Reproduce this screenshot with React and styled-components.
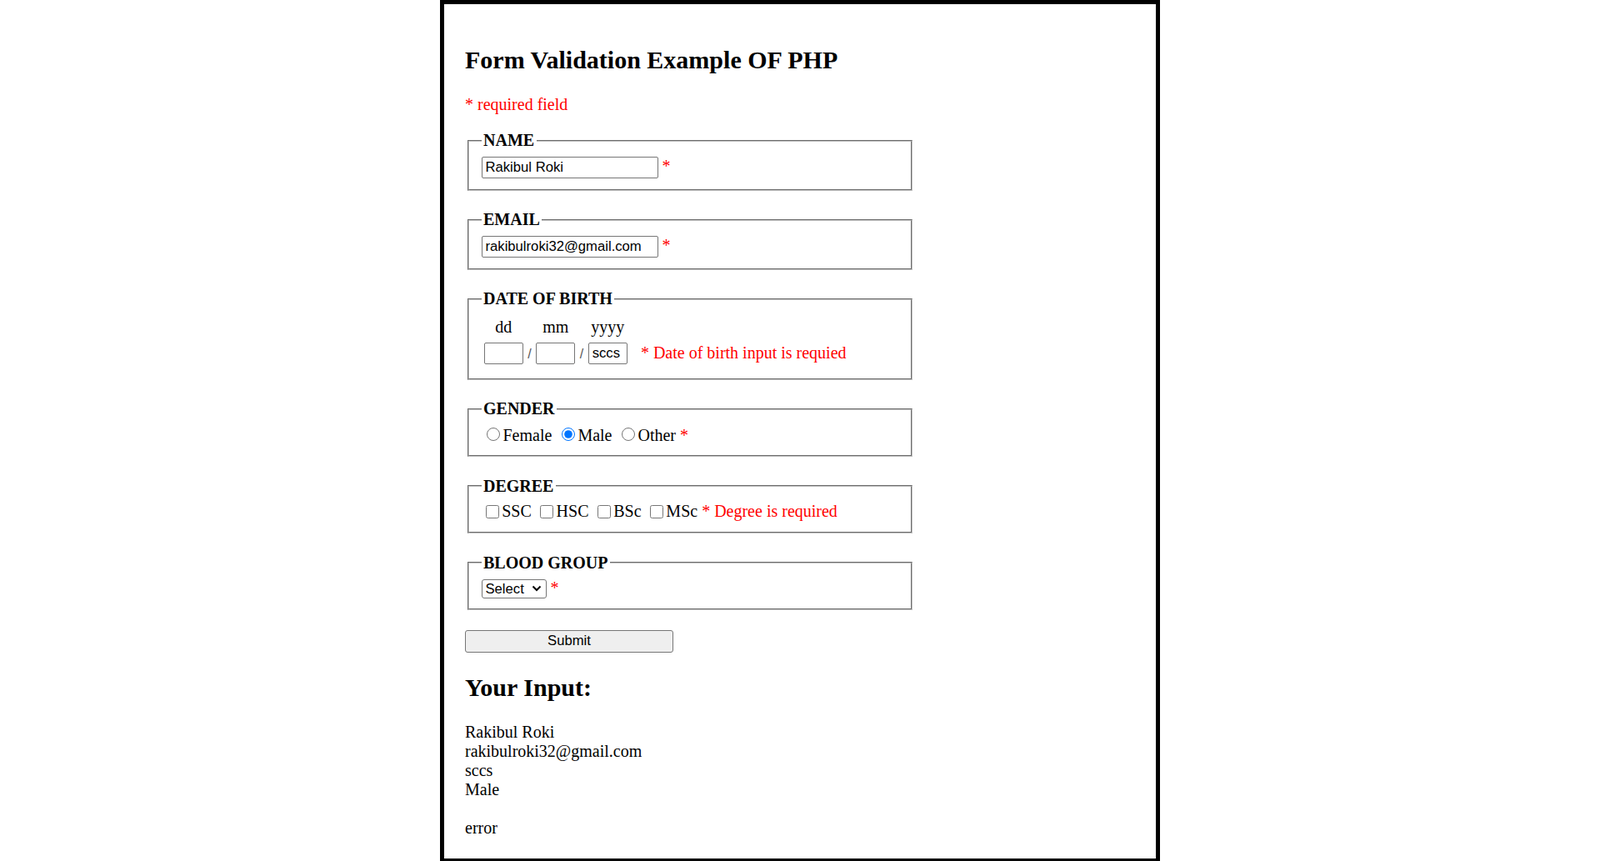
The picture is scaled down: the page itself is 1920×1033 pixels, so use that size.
import React from 'react';
import styled, { createGlobalStyle } from 'styled-components';

const GlobalStyle = createGlobalStyle`
  body {
    margin: 0;
    background: #fff;
    color: #000;
    font-family: "Liberation Serif", "Times New Roman", serif;
    font-size: 20px;
  }
`

const Page = styled.div`
  box-sizing: border-box;
  width: 864px;
  min-height: 1033px;
  margin: 0 auto;
  padding: 25px;
  border: 5px solid #000;
`

const Heading = styled.h2`
  margin: 25px 0;
  font-size: 30px;
  font-weight: bold;
`

const RequiredNote = styled.p`
  margin: 20px 0;
  color: #ff0000;
`

const Form = styled.form`
  margin: 0;
`

const Fieldset = styled.fieldset`
  box-sizing: border-box;
  width: 534px;
  min-width: 0;
  margin: 0 2.5px 23.5px;
  padding: 7px 15px 12.5px;
  border: 2px groove rgb(192, 192, 192);
`

const Legend = styled.legend`
  padding: 0 2.5px;
  font-weight: bold;
`

const TextInput = styled.input`
  box-sizing: border-box;
  width: ${(p) => p.$w || 212}px;
  height: 26px;
  margin: 1px 0 0;
  padding: 1px 4px;
  border: 1px solid #767676;
  border-radius: 2px;
  background: #fff;
  color: #000;
  font-family: "Liberation Sans", Arial, sans-serif;
  font-size: 16.67px;
`

const Star = styled.span`
  color: #ff0000;
`

const DateTable = styled.table`
  border-collapse: separate;
  border-spacing: 2.5px 3px;
  margin: 0;
`

const Cell = styled.td`
  padding: 1.25px;
  text-align: ${(p) => (p.$center ? 'center' : 'left')};
  vertical-align: middle;
`

const Slash = styled.span`
  margin: 0 1px;
  color: #555;
  font-family: "Liberation Sans", Arial, sans-serif;
  font-size: 16px;
`

const ErrorCell = styled(Cell)`
  padding-left: 13px;
  color: #ff0000;
  white-space: nowrap;
`

const Radio = styled.input.attrs({ type: 'radio' })`
  width: 16px;
  height: 16px;
  margin: 3.75px 3.75px 0 6.25px;
`

const Checkbox = styled.input.attrs({ type: 'checkbox' })`
  width: 16px;
  height: 16px;
  margin: 3.75px 3.75px 3.75px 5px;
  vertical-align: -2px;
`

const SelectWrap = styled.span`
  position: relative;
  display: inline-block;
`

const Select = styled.select`
  box-sizing: border-box;
  width: 78px;
  height: 23px;
  margin: 0;
  padding: 0 22px 0 4px;
  border: 1px solid #767676;
  border-radius: 3px;
  background: #fff;
  color: #000;
  font-family: "Liberation Sans", Arial, sans-serif;
  font-size: 16.67px;
  appearance: none;
  -webkit-appearance: none;
`

const Chevron = styled.svg`
  position: absolute;
  right: 6px;
  top: 50%;
  width: 12px;
  height: 8px;
  margin-top: -4px;
  pointer-events: none;
`

const SubmitButton = styled.button`
  display: block;
  box-sizing: border-box;
  width: 250px;
  height: 27px;
  margin: 0;
  padding: 0;
  border: 1px solid #767676;
  border-radius: 3px;
  background: #efefef;
  color: #000;
  font-family: "Liberation Sans", Arial, sans-serif;
  font-size: 16.67px;
`

const Output = styled.div`
  line-height: 23px;
`

const OutputLine = styled.div`
  min-height: 23px;
`

const results = ['Rakibul Roki', 'rakibulroki32@gmail.com', 'sccs', 'Male', '', 'error'];

const App = () => {
  return (
    <>
      <GlobalStyle />
      <Page>
        <Heading>Form Validation Example OF PHP</Heading>
        <RequiredNote>* required field</RequiredNote>

        <Form onSubmit={(e) => e.preventDefault()}>
          <Fieldset>
            <Legend>NAME</Legend>
            <TextInput type="text" defaultValue="Rakibul Roki" /> <Star>*</Star>
          </Fieldset>

          <Fieldset>
            <Legend>EMAIL</Legend>
            <TextInput type="text" defaultValue="rakibulroki32@gmail.com" /> <Star>*</Star>
          </Fieldset>

          <Fieldset>
            <Legend>DATE OF BIRTH</Legend>
            <DateTable>
              <tbody>
                <tr>
                  <Cell $center>dd</Cell>
                  <Cell />
                  <Cell $center>mm</Cell>
                  <Cell />
                  <Cell $center>yyyy</Cell>
                  <Cell />
                </tr>
                <tr>
                  <Cell><TextInput $w={47} type="text" /></Cell>
                  <Cell><Slash>/</Slash></Cell>
                  <Cell><TextInput $w={47} type="text" /></Cell>
                  <Cell><Slash>/</Slash></Cell>
                  <Cell><TextInput $w={47} type="text" defaultValue="sccs" /></Cell>
                  <ErrorCell>* Date of birth input is requied</ErrorCell>
                </tr>
              </tbody>
            </DateTable>
          </Fieldset>

          <Fieldset>
            <Legend>GENDER</Legend>
            <Radio name="gender" value="female" />Female{' '}
            <Radio name="gender" value="male" defaultChecked />Male{' '}
            <Radio name="gender" value="other" />Other <Star>*</Star>
          </Fieldset>

          <Fieldset>
            <Legend>DEGREE</Legend>
            <Checkbox name="ssc" />SSC{' '}
            <Checkbox name="hsc" />HSC{' '}
            <Checkbox name="bsc" />BSc{' '}
            <Checkbox name="msc" />MSc <Star>* Degree is required</Star>
          </Fieldset>

          <Fieldset>
            <Legend>BLOOD GROUP</Legend>
            <SelectWrap>
              <Select defaultValue="">
                <option value="">Select</option>
                <option value="A+">A+</option>
                <option value="B+">B+</option>
                <option value="O+">O+</option>
                <option value="AB+">AB+</option>
              </Select>
              <Chevron viewBox="0 0 12 8">
                <path d="M1.5 1.5 L6 6 L10.5 1.5" fill="none" stroke="#000" strokeWidth="2" />
              </Chevron>
            </SelectWrap> <Star>*</Star>
          </Fieldset>

          <SubmitButton type="submit">Submit</SubmitButton>
        </Form>

        <Heading>Your Input:</Heading>
        <Output>
          {results.map((line, i) => (
            <OutputLine key={i}>{line}</OutputLine>
          ))}
        </Output>
      </Page>
    </>
  )
};

export default App;
